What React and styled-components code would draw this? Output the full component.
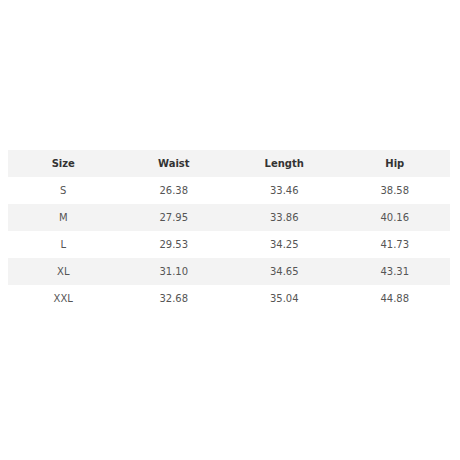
import React from "react";
import styled, { createGlobalStyle } from "styled-components";

const rows = [
  ["S", "26.38", "33.46", "38.58"],
  ["M", "27.95", "33.86", "40.16"],
  ["L", "29.53", "34.25", "41.73"],
  ["XL", "31.10", "34.65", "43.31"],
  ["XXL", "32.68", "35.04", "44.88"],
];

const App = () => {
  return (
    <>
      <GlobalStyle />
      <StPage>
        <StTable>
          <StRow $shaded>
            <StHead>Size</StHead>
            <StHead>Waist</StHead>
            <StHead>Length</StHead>
            <StHead>Hip</StHead>
          </StRow>
          {rows.map((row, i) => (
            <StRow key={row[0]} $shaded={i % 2 === 1}>
              {row.map((cell, j) => (
                <StCell key={j}>{cell}</StCell>
              ))}
            </StRow>
          ))}
        </StTable>
      </StPage>
    </>
  );
};

const GlobalStyle = createGlobalStyle`
  body {
    margin: 0;
    background: #ffffff;
    font-family: "DejaVu Sans", Verdana, sans-serif;
  }
`;

const StPage = styled.div`
  width: 460px;
  height: 460px;
  padding: 150px 10px 0 8px;
  box-sizing: border-box;
`;

const StTable = styled.div`
  display: flex;
  flex-direction: column;
`;

const StRow = styled.div`
  display: grid;
  grid-template-columns: repeat(4, 1fr);
  height: 27px;
  align-items: center;
  background-color: ${(props) => (props.$shaded ? "#f3f3f3" : "#ffffff")};
`;

const StHead = styled.div`
  text-align: center;
  font-size: 10px;
  font-weight: bold;
  color: #333333;
`;

const StCell = styled.div`
  text-align: center;
  font-size: 10px;
  color: #555555;
`;

export default App;
